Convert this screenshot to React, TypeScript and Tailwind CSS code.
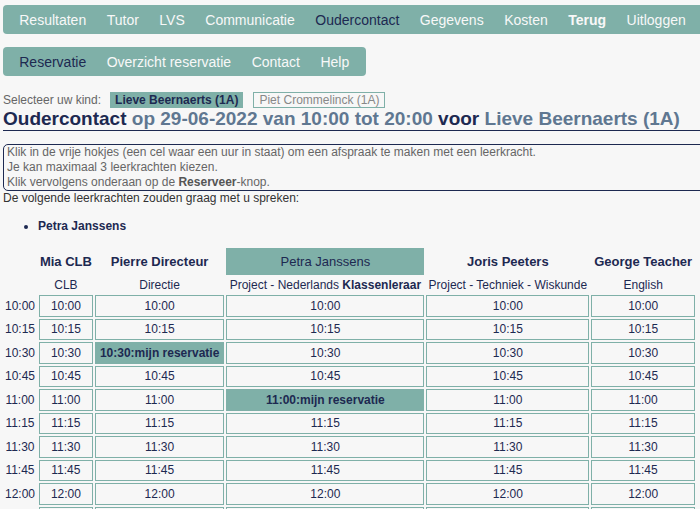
import React from 'react';

const teachers = [
  { name: 'Mia CLB', subject: <>CLB</>, width: 'w-[54px]' },
  { name: 'Pierre Directeur', subject: <>Directie</>, width: 'w-[130px]' },
  {
    name: 'Petra Janssens',
    subject: (
      <>
        Project - Nederlands <b>Klassenleraar</b>
      </>
    ),
    width: 'w-[198px]',
    requested: true,
  },
  { name: 'Joris Peeters', subject: <>Project - Techniek - Wiskunde</>, width: 'w-[163px]' },
  { name: 'George Teacher', subject: <>English</>, width: 'w-[104px]' },
];

// reservations: teacher index -> time
const reservations: Record<number, string> = { 1: '10:30', 2: '11:00' };

// slots from 10:00 until 20:00, every 15 minutes
const times: string[] = [];
for (let h = 10; h < 20; h++) {
  for (let m = 0; m < 60; m += 15) {
    times.push(`${h}:${m === 0 ? '00' : m}`);
  }
}

const mainNav = ['Resultaten', 'Tutor', 'LVS', 'Communicatie', 'Oudercontact', 'Gegevens', 'Kosten', 'Terug', 'Uitloggen'];
const subNav = ['Reservatie', 'Overzicht reservatie', 'Contact', 'Help'];

const App: React.FC = () => {
  return (
    <div className="h-[509px] w-[700px] overflow-hidden bg-[#f7f7f7] px-[3px] font-['Liberation_Sans',Arial,sans-serif] text-[#1d2951]">
      {/* main navigation */}
      <nav className="mt-[5px] flex h-[29px] w-[720px] items-center rounded-[4px] bg-[#7fb0a8] pl-[6px] text-[14px]">
        {mainNav.map(item => (
          <a
            key={item}
            className={
              'px-[10.25px] leading-none ' +
              (item === 'Oudercontact' ? 'text-[#1d2951]' : 'text-[#f8f8f8]') +
              (item === 'Terug' ? ' font-bold' : '')
            }
          >
            {item}
          </a>
        ))}
      </nav>

      {/* sub navigation */}
      <nav className="mt-[13px] flex h-[29px] w-[363px] items-center rounded-[4px] bg-[#7fb0a8] px-[6px] text-[14px]">
        {subNav.map(item => (
          <a
            key={item}
            className={'px-[10.25px] leading-none ' + (item === 'Reservatie' ? 'text-[#1d2951]' : 'text-[#f8f8f8]')}
          >
            {item}
          </a>
        ))}
      </nav>

      {/* child selection */}
      <div className="mt-[16px] flex h-[16px] items-center text-[12px]">
        <span className="text-[#666]">Selecteer uw kind:</span>
        <span className="ml-[9px] flex h-[16px] items-center bg-[#7fb0a8] px-[5px] font-bold text-[#1d2951]">
          Lieve Beernaerts (1A)
        </span>
        <span className="ml-[10px] flex h-[16px] items-center border border-[#7fb0a8] px-[5px] text-[#888]">
          Piet Crommelinck (1A)
        </span>
      </div>

      <h2 className="-mr-[3px] border-b border-[#1d2951] text-[19px] font-bold leading-[22px] whitespace-nowrap">
        Oudercontact <span className="text-[#5f7791]">op 29-06-2022 van 10:00 tot 20:00</span> voor{' '}
        <span className="text-[#5f7791]">Lieve Beernaerts (1A)</span>
      </h2>

      {/* instructions */}
      <div className="mt-[13px] w-[740px] rounded-[5px] border border-[#1d2951] pl-[3px] text-[12px] leading-[15px] text-[#666]">
        <p>Klik in de vrije hokjes (een cel waar een uur in staat) om een afspraak te maken met een leerkracht.</p>
        <p>Je kan maximaal 3 leerkrachten kiezen.</p>
        <p>
          Klik vervolgens onderaan op de <b className="text-[#555]">Reserveer</b>-knop.
        </p>
      </div>

      <p className="text-[12px] leading-[15px] text-[#333]">De volgende leerkrachten zouden graag met u spreken:</p>

      <ul className="mt-[12.5px] list-disc pl-[35px] text-[12px] leading-[15px] font-bold">
        <li>Petra Janssens</li>
      </ul>

      {/* schedule */}
      <table className="mt-[12.5px] -ml-[2px] table-fixed border-separate border-spacing-[2px] text-[12px]">
        <colgroup>
          <col className="w-[34px]" />
          {teachers.map(t => (
            <col key={t.name} className={t.width} />
          ))}
        </colgroup>
        <thead>
          <tr className="h-[27px]">
            <th />
            {teachers.map(t =>
              t.requested ? (
                <th key={t.name} className="bg-[#7fb0a8] text-[13px] font-normal">
                  {t.name}
                </th>
              ) : (
                <th key={t.name} className="text-[13px] font-bold">
                  {t.name}
                </th>
              )
            )}
          </tr>
          <tr className="h-[16px]">
            <th />
            {teachers.map(t => (
              <th key={t.name} className="p-0 font-normal leading-[16px] whitespace-nowrap">
                {t.subject}
              </th>
            ))}
          </tr>
        </thead>
        <tbody>
          {times.map(time => (
            <tr key={time} className="h-[21.5px]">
              <td className="p-0 text-center">{time}</td>
              {teachers.map((t, i) =>
                reservations[i] === time ? (
                  <td key={t.name} className="border border-[#7fb0a8] bg-[#7fb0a8] p-0 text-center font-bold">
                    {time}:mijn reservatie
                  </td>
                ) : (
                  <td key={t.name} className="border border-[#7fb0a8] p-0 text-center">
                    {time}
                  </td>
                )
              )}
            </tr>
          ))}
        </tbody>
      </table>
    </div>
  );
};

export default App;
